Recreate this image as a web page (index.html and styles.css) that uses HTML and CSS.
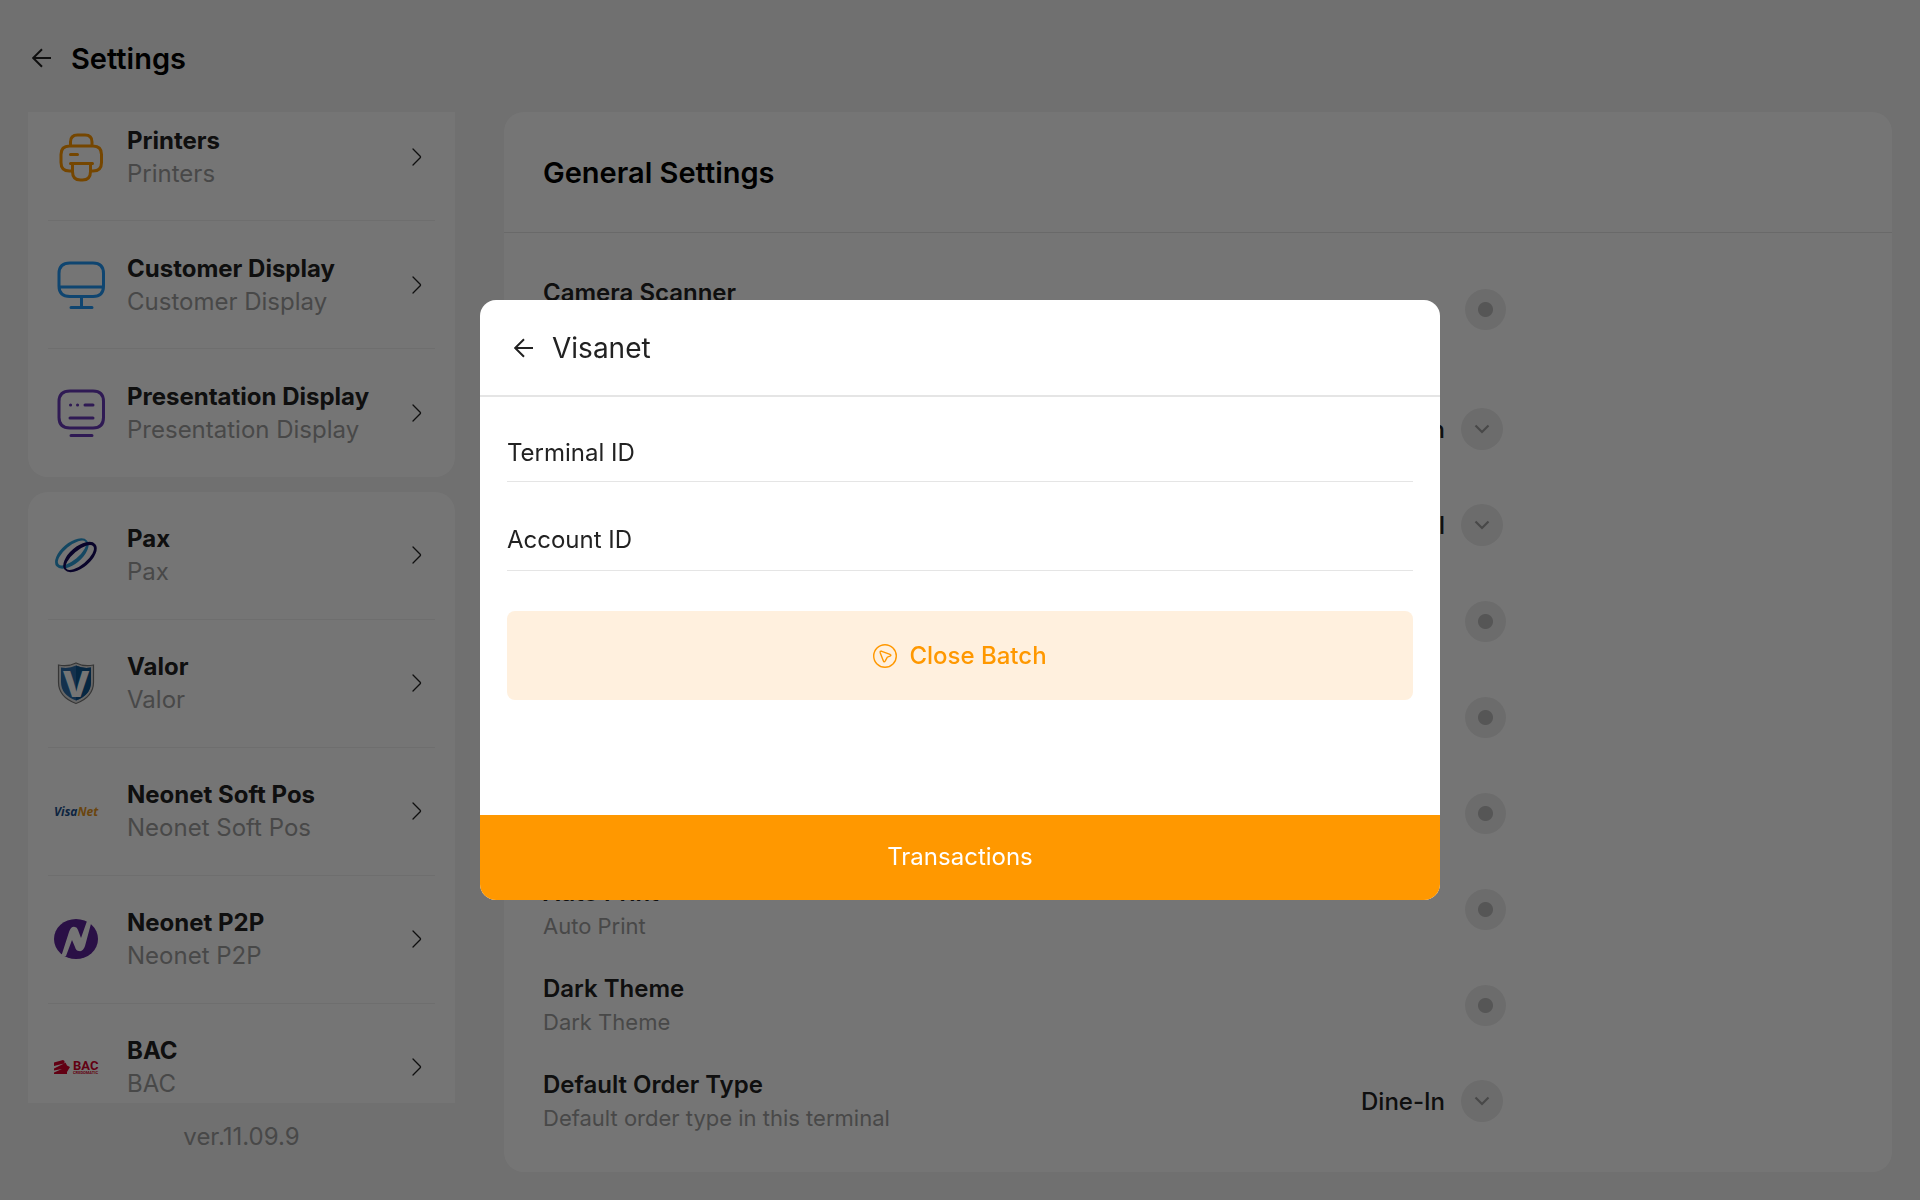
FILE: index.html
```html
<!DOCTYPE html>
<html lang="en">
<head>
<meta charset="utf-8">
<title>Settings</title>
<meta name="viewport" content="width=device-width, initial-scale=1">
<link rel="stylesheet" href="styles.css">
</head>
<body>
<svg class="defs" aria-hidden="true">
  <symbol id="back" viewBox="0 0 20 20"><path d="M19 10H1.500M10 1.200 1.200 10 10 18.800" fill="none" stroke="currentColor" stroke-width="2"/></symbol>
  <symbol id="next" viewBox="0 0 10 18"><path d="M1 1 8.200 8.200Q9 9 8.200 9.800L1 17" fill="none" stroke="currentColor" stroke-width="1.300" stroke-linecap="round"/></symbol>
  <symbol id="down" viewBox="0 0 16 10"><path d="M1.500 1.500 8 8 14.500 1.500" fill="none" stroke="currentColor" stroke-width="2.200"/></symbol>
</svg>
<div class="app">
  <header class="topbar">
    <button class="icon-btn" type="button" aria-label="Back"><svg class="back"><use href="#back"/></svg></button>
    <h1 class="heading">Settings</h1>
  </header>
  <div class="columns">
    <aside class="sidebar">
      <nav class="menu" aria-label="Settings sections">
        <ul class="card card-scrolled">
          <li class="item"><a class="link" href="#printers">
            <span class="slot"><svg class="glyph orange" viewBox="0 0 54 54"><path d="M16.500 15.500V12q0-7 7-7h7.500q7 0 7 7v3.500M17 41h-1.500q-8.500 0-8.500-8.500v-8q0-8.500 8.500-8.500h23.500q8.500 0 8.500 8.500v8q0 8.500-8.500 8.500h-1.500M16.500 33.500h22M16.500 24.500h7M18.500 34v7.500q0 8.500 8 8.500h2q8 0 8-8.500v-7.500"/></svg></span>
            <span class="text"><strong class="name">Printers</strong><span class="note">Printers</span></span><svg class="next"><use href="#next"/></svg></a></li>
          <li class="item"><a class="link" href="#customer">
            <span class="slot"><svg class="glyph blue" viewBox="0 0 54 54"><path d="M16 5h23q10.500 0 10.500 10.500v12.500q0 10.500-10.500 10.500H16Q5 38.500 5 28V15.500Q5 5 16 5ZM5 29h44M27.500 39v10M17 49.500h21"/></svg></span>
            <span class="text"><strong class="name">Customer Display</strong><span class="note">Customer Display</span></span><svg class="next"><use href="#next"/></svg></a></li>
          <li class="item"><a class="link" href="#presentation">
            <span class="slot"><svg class="glyph violet" viewBox="0 0 54 54"><path d="M16 5h23q10.500 0 10.500 10.500v16q0 10.500-10.500 10.500H16Q5 42 5 31.500V15.500Q5 5 16 5ZM16.500 19h.1M23.500 19h.1M31 19h8M16 32h23M17 49.500h21"/></svg></span>
            <span class="text"><strong class="name">Presentation Display</strong><span class="note">Presentation Display</span></span><svg class="next"><use href="#next"/></svg></a></li>
        </ul>
        <ul class="card card-payments">
          <li class="item"><a class="link" href="#pax">
            <span class="slot"><svg class="logo" viewBox="0 0 44 44"><g fill-rule="evenodd"><path fill="#2a9bd6" transform="translate(17.800 20.500) rotate(-40)" d="M-20 0a20 10.500 0 1 0 40 0a20 10.500 0 1 0-40 0ZM-17-.3a17.500 7 0 1 1 35 0a17.500 7 0 1 1-35 0Z"/><path fill="#140a5c" transform="translate(26 24) rotate(-40)" d="M-20 0a20 10.500 0 1 0 40 0a20 10.500 0 1 0-40 0ZM-18 .3a17.500 7 0 1 1 35 0a17.500 7 0 1 1-35 0Z"/></g></svg></span>
            <span class="text"><strong class="name">Pax</strong><span class="note">Pax</span></span><svg class="next"><use href="#next"/></svg></a></li>
          <li class="item"><a class="link" href="#valor">
            <span class="slot"><svg class="logo" viewBox="0 0 44 44"><path fill="#dedede" stroke="#777" stroke-width="1.200" d="M22 2Q30 6 39.500 4v17Q39.500 36 22 42.500 4.500 36 4.500 21V4Q14 6 22 2Z"/><path fill="#2d6ca8" d="M22 4.500Q29 8 37 6.500V21Q37 34 22 39.500 7 34 7 21V6.500Q15 8 22 4.500Z"/><path fill="#0f5590" d="M22 4.500Q29 8 37 6.500V21Q37 34 22 39.500Z"/><text x="22" y="36" text-anchor="middle" class="shield-letter">V</text></svg></span>
            <span class="text"><strong class="name">Valor</strong><span class="note">Valor</span></span><svg class="next"><use href="#next"/></svg></a></li>
          <li class="item"><a class="link" href="#neonet-soft-pos">
            <span class="slot"><svg class="logo" viewBox="0 0 44 44"><text x="0" y="27" class="visanet"><tspan fill="#1c4f8c">Visa</tspan><tspan fill="#e8971e">Net</tspan></text></svg></span>
            <span class="text"><strong class="name">Neonet Soft Pos</strong><span class="note">Neonet Soft Pos</span></span><svg class="next"><use href="#next"/></svg></a></li>
          <li class="item"><a class="link" href="#neonet-p2p">
            <span class="slot"><svg class="logo" viewBox="0 0 44 44"><ellipse cx="22" cy="22" rx="22" ry="20" fill="#5c2399"/><path fill="#fff" d="M7 40 15 15q2-6 6-5 2 0 3 3l3 8L33 4l5-1-7 26q-2 6-6 5-3 0-4-4l-3-7-6 16Z"/></svg></span>
            <span class="text"><strong class="name">Neonet P2P</strong><span class="note">Neonet P2P</span></span><svg class="next"><use href="#next"/></svg></a></li>
          <li class="item"><a class="link" href="#bac">
            <span class="slot"><svg class="logo" viewBox="0 0 44 44"><path fill="#d6002a" d="M0 17.500 9 15 10.500 16v2.500l1-1 1.500 3 3 1.500-3 5v2H0v-1.500l8-3.500-8 1.500v-2l10-5-10 2.500Z"/><text x="19" y="25" class="bac">BAC</text><text x="19" y="29" class="bac-sub">CREDOMATIC</text></svg></span>
            <span class="text"><strong class="name">BAC</strong><span class="note">BAC</span></span><svg class="next"><use href="#next"/></svg></a></li>
        </ul>
      </nav>
      <p class="version">ver.11.09.9</p>
    </aside>
    <main class="panel">
      <h2 class="panel-head heading">General Settings</h2>
      <div class="options">
        <div class="option option-first"><label class="text" for="camera"><strong class="label">Camera Scanner</strong></label><input class="dot" id="camera" type="radio"></div>
        <div class="option"><button class="picker" type="button">Main Screen<span class="round"><svg class="down"><use href="#down"/></svg></span></button></div>
        <div class="option"><button class="picker" type="button">All<span class="round"><svg class="down"><use href="#down"/></svg></span></button></div>
        <div class="option"><input class="dot" type="radio" aria-label="Option 4"></div>
        <div class="option"><input class="dot" type="radio" aria-label="Option 5"></div>
        <div class="option"><input class="dot" type="radio" aria-label="Option 6"></div>
        <div class="option"><label class="text" for="print"><strong class="label">Auto Print</strong><span class="hint">Auto Print</span></label><input class="dot" id="print" type="radio"></div>
        <div class="option"><label class="text" for="dark"><strong class="label">Dark Theme</strong><span class="hint">Dark Theme</span></label><input class="dot" id="dark" type="radio"></div>
        <div class="option"><label class="text" for="order"><strong class="label">Default Order Type</strong><span class="hint">Default order type in this terminal</span></label><button class="picker" id="order" type="button">Dine-In<span class="round"><svg class="down"><use href="#down"/></svg></span></button></div>
      </div>
    </main>
  </div>
</div>
<div class="overlay">
  <section class="modal" role="dialog" aria-modal="true" aria-labelledby="modal-title">
    <header class="modal-head">
      <button class="icon-btn" type="button" aria-label="Back"><svg class="back"><use href="#back"/></svg></button>
      <h2 class="modal-title" id="modal-title">Visanet</h2>
    </header>
    <form class="form">
      <input class="field" type="text" aria-label="Terminal ID" placeholder="Terminal ID">
      <input class="field" type="text" aria-label="Account ID" placeholder="Account ID">
      <button class="batch" type="button"><svg class="batch-icon" viewBox="0 0 24 24"><circle cx="12" cy="12" r="11.300"/><path d="M8.800 7.300 17 10.300Q18.800 11.100 17 12.100L14.300 13.200 12.300 16.900Q11 18.800 10.300 16.700L7.200 8.700Q6.800 6.800 8.800 7.300Z"/></svg>Close Batch</button>
    </form>
    <button class="transactions" type="button">Transactions</button>
  </section>
</div>
</body>
</html>
```
FILE: styles.css
```css
* { box-sizing: border-box; }
body, h1, h2, p, ul { margin: 0; padding: 0; }
body {
  font-family: Inter, "Liberation Sans", sans-serif;
  font-size: 24px;
  line-height: 33px;
  color: #222;
  background: #f4f4f4;
}
button, input { font: inherit; color: inherit; border: 0; background: none; padding: 0; margin: 0; }
a { color: inherit; text-decoration: none; }
ul { list-style: none; }
.defs { position: absolute; width: 0; height: 0; }

.app { height: 100vh; display: flex; flex-direction: column; padding: 0 28px 28px; }
.topbar { height: 112px; flex: none; display: flex; align-items: center; gap: 19px; padding: 4px 4px 0; }
.heading { font-size: 29px; font-weight: 600; color: #000; }
.icon-btn { display: flex; }
.back { width: 20px; height: 20px; }

.columns { flex: 1; min-height: 0; display: grid; grid-template-columns: 427px 1fr; gap: 49px; }
.sidebar { display: flex; flex-direction: column; min-height: 0; }
.menu { flex: 1; min-height: 0; overflow: hidden; }
.card { background: #fff; border-radius: 20px; padding: 0 20px; }
.card-scrolled { margin-top: -19px; margin-bottom: 15px; }
.link {
  height: 128px;
  display: grid;
  grid-template-columns: 73px 1fr 10px;
  align-items: center;
  padding: 0 13px 0 6px;
  border-bottom: 1px solid #f0f0f0;
}
.card-payments .link { padding-bottom: 2px; }
.item:last-child .link { border-color: transparent; }
.slot { display: flex; }
.glyph { width: 54px; height: 54px; fill: none; stroke: currentColor; stroke-width: 3; stroke-linecap: round; stroke-linejoin: round; }
.orange { color: #ff9800; }
.blue { color: #2196f3; }
.violet { color: #673ab7; }
.logo { width: 44px; height: 44px; overflow: visible; }
.shield-letter { font-size: 36px; font-weight: 800; fill: #fff; }
.visanet { font: italic 700 12px "Open Sans", sans-serif; }
.bac { font: 700 13px Roboto, sans-serif; fill: #d6002a; }
.bac-sub { font: 700 4px Roboto, sans-serif; fill: #d6002a; }
.text { display: flex; flex-direction: column; }
.name { font-weight: 700; }
.note { color: #9e9e9e; }
.next { width: 10px; height: 18px; }
.version { height: 69px; flex: none; padding-top: 17px; text-align: center; color: #9e9e9e; }

.panel { background: #fff; border-radius: 20px; overflow: hidden; }
.panel-head { height: 121px; display: flex; align-items: center; padding: 0 39px; border-bottom: 1px solid #e5e5e5; }
.options { padding: 28px 39px 0; width: 1041px; max-width: 100%; }
.option { height: 96px; display: flex; align-items: center; }
.option .text { gap: 1px; min-height: 68px; padding-top: 1px; }
.option-first { margin-bottom: 24px; }
.label { font-weight: 600; }
.hint { font-size: 22px; color: #9e9e9e; }
.dot {
  appearance: none;
  width: 41px;
  height: 41px;
  margin-left: auto;
  border-radius: 50%;
  background: radial-gradient(circle, #bbb 7px, #ebebeb 8px);
}
.picker { margin-left: auto; margin-right: 3px; display: flex; align-items: center; gap: 16px; font-weight: 500; }
.round { width: 42px; height: 42px; border-radius: 50%; background: #ebebeb; display: flex; align-items: center; justify-content: center; color: #9e9e9e; }
.down { width: 16px; height: 10px; }

.overlay { position: fixed; inset: 0; display: flex; align-items: center; justify-content: center; background: rgba(0, 0, 0, .54); }
.modal { width: 50vw; min-height: 50vh; display: flex; flex-direction: column; background: #fff; border-radius: 16px; overflow: hidden; }
.modal-head { height: 97px; display: flex; align-items: center; gap: 18px; padding: 1px 34px 0; border-bottom: 2px solid #e5e5e5; }
.modal-title { font-size: 28px; font-weight: 400; }
.form { flex: 1; display: flex; flex-direction: column; padding: 27px 27px 0; }
.field { height: 58px; border-bottom: 1px solid #e5e5e5; outline: 0; }
.field + .field { height: 59px; margin-top: 30px; padding-bottom: 4px; }
.field::placeholder { color: #222; opacity: 1; }
.batch { height: 89px; margin-top: 40px; display: flex; align-items: center; justify-content: center; gap: 12px; border-radius: 8px; background: #fff0de; color: #ff9800; font-weight: 500; }
.batch-icon { width: 24px; height: 24px; fill: none; stroke: currentColor; stroke-width: 1.400; }
.transactions { height: 85px; padding-bottom: 2px; background: #ff9800; color: #fff; }
```
